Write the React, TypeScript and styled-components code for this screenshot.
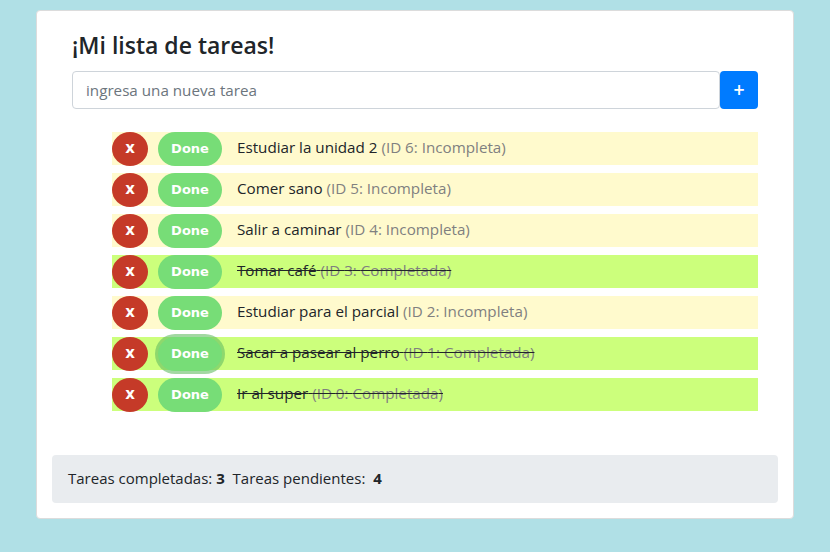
import React from "react";
import styled, { createGlobalStyle } from "styled-components";

const Global = createGlobalStyle`
  html, body { margin: 0; padding: 0; }
  body {
    background: #b0e0e6;
    font-family: "Open Sans", "Noto Sans", sans-serif;
    color: #212529;
    font-size: 15.2px;
  }
`;

const Page = styled.div`
  padding: 10px 36px 0 36px;
  width: 830px;
  box-sizing: border-box;
`;

const Card = styled.div`
  background: #fff;
  border: 1px solid #dcdcdc;
  border-radius: 4px;
  padding: 16px 15px 15px 15px;
  box-sizing: border-box;
  width: 758px;
`;

const Inner = styled.div`
  padding: 0 20px;
`;

const Title = styled.h3`
  margin: 0 0 8px 0;
  font-size: 23px;
  font-weight: 600;
  line-height: 36px;
  color: #212529;
`;

const InputGroup = styled.div`
  display: flex;
  height: 38px;
`;

const Input = styled.input`
  flex: 1;
  border: 1px solid #ced4da;
  border-radius: 4px;
  padding: 0 13px;
  font-family: inherit;
  font-size: 15.2px;
  color: #495057;
  outline: none;
  &::placeholder { color: #6c757d; }
`;

const AddButton = styled.button`
  width: 38px;
  border: none;
  border-radius: 4px;
  background: #007bff;
  color: #fff;
  font-weight: bold;
  font-size: 15px;
  font-family: "DejaVu Sans", sans-serif;
  padding: 0;
`;

const List = styled.ul`
  list-style: none;
  margin: 23px 0 0 0;
  padding: 0 0 0 40px;
  display: flex;
  flex-direction: column;
  gap: 8px;
`;

const Row = styled.li<{ $done: boolean }>`
  display: flex;
  align-items: center;
  height: 33px;
  background: ${(p) => (p.$done ? "#ccff7c" : "#fffacd")};
`;

const DeleteButton = styled.button`
  width: 36px;
  height: 34px;
  border: none;
  border-radius: 50%;
  background: #c53a28;
  color: #fff;
  font-family: "DejaVu Sans", Verdana, sans-serif;
  font-weight: bold;
  font-size: 15px;
  padding: 0 0 2px 0;
`;

const DoneButton = styled.button<{ $focus?: boolean }>`
  width: 64px;
  height: 34px;
  margin-left: 10px;
  border: none;
  border-radius: 17px;
  background: #77dd77;
  color: #fff;
  font-family: "DejaVu Sans", Verdana, sans-serif;
  font-weight: bold;
  font-size: 13px;
  padding: 0;
  box-shadow: ${(p) => (p.$focus ? "0 0 0 3px rgba(100, 190, 100, 0.6)" : "none")};
`;

const Label = styled.span<{ $done: boolean }>`
  margin-left: 15px;
  padding-bottom: 3px;
  text-decoration: ${(p) => (p.$done ? "line-through" : "none")};
`;

const Meta = styled.span`
  color: #808080;
`;

const Footer = styled.div`
  margin-top: 44px;
  background: #e9ecef;
  border-radius: 4px;
  padding: 0 16px 2px 16px;
  height: 48px;
  box-sizing: border-box;
  display: flex;
  align-items: center;
  font-size: 15px;
`;

const Strong = styled.b`
  font-weight: 700;
`;

type Task = { id: number; text: string; done: boolean; focus?: boolean };

const tasks: Task[] = [
  { id: 6, text: "Estudiar la unidad 2", done: false },
  { id: 5, text: "Comer sano", done: false },
  { id: 4, text: "Salir a caminar", done: false },
  { id: 3, text: "Tomar café", done: true },
  { id: 2, text: "Estudiar para el parcial", done: false },
  { id: 1, text: "Sacar a pasear al perro", done: true, focus: true },
  { id: 0, text: "Ir al super", done: true },
];

export default function App() {
  const completed = tasks.filter((t) => t.done).length;
  const pending = tasks.length - completed;
  return (
    <>
      <Global />
      <Page>
        <Card>
          <Inner>
            <Title>¡Mi lista de tareas!</Title>
            <InputGroup>
              <Input placeholder="ingresa una nueva tarea" />
              <AddButton>+</AddButton>
            </InputGroup>
            <List>
              {tasks.map((t) => (
                <Row key={t.id} $done={t.done}>
                  <DeleteButton>x</DeleteButton>
                  <DoneButton $focus={t.focus}>Done</DoneButton>
                  <Label $done={t.done}>
                    {t.text}{" "}
                    <Meta>
                      (ID {t.id}: {t.done ? "Completada" : "Incompleta"})
                    </Meta>
                  </Label>
                </Row>
              ))}
            </List>
          </Inner>
          <Footer>
            Tareas completadas:&nbsp;<Strong>{completed}</Strong>&nbsp;&nbsp;Tareas pendientes:&nbsp;&nbsp;
            <Strong>{pending}</Strong>
          </Footer>
        </Card>
      </Page>
    </>
  );
}
